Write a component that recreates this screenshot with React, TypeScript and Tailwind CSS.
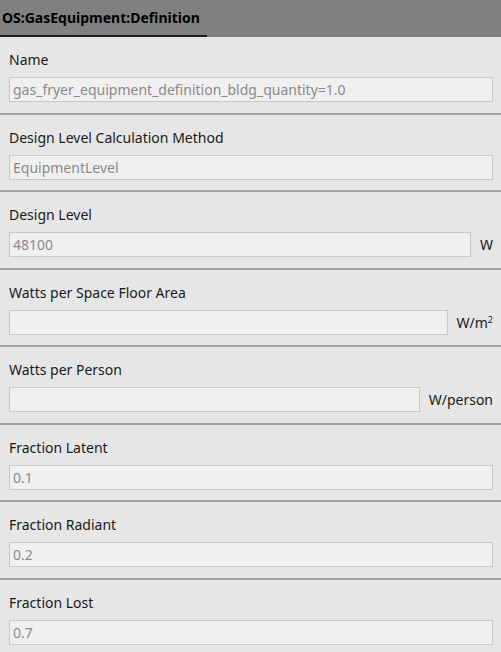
import React from "react";

interface Field {
  label: string;
  value: string;
  unit?: React.ReactNode;
}

const fields: Field[] = [
  { label: "Name", value: "gas_fryer_equipment_definition_bldg_quantity=1.0" },
  { label: "Design Level Calculation Method", value: "EquipmentLevel" },
  { label: "Design Level", value: "48100", unit: "W" },
  {
    label: "Watts per Space Floor Area",
    value: "",
    unit: (
      <span>
        W/m<sup className="text-[9px]">2</sup>
      </span>
    ),
  },
  { label: "Watts per Person", value: "", unit: "W/person" },
  { label: "Fraction Latent", value: "0.1" },
  { label: "Fraction Radiant", value: "0.2" },
  { label: "Fraction Lost", value: "0.7" },
];

function FieldRow({ field }: { field: Field }) {
  return (
    <div className="border-b-2 border-[#a3a3a3] pt-[13px] pb-[11px] pl-[9px] pr-[8px] h-[77.5px]">
      <div className="h-[20px] leading-[20px] text-[14px] text-[#1a1a1a]">{field.label}</div>
      <div className="mt-[7px] flex items-center gap-[9px]">
        <div className="flex-1 h-[25px] bg-[#f0f0f0] border border-[#c8c8c8] flex items-center px-[3px] text-[14px] text-[#8a8a8a] whitespace-nowrap overflow-hidden">
          {field.value}
        </div>
        {field.unit && <div className="text-[14px] text-[#1a1a1a]">{field.unit}</div>}
      </div>
    </div>
  );
}

export default function App() {
  return (
    <div
      className="w-[501px] h-[652px] bg-[#e6e6e6] overflow-hidden"
      style={{ fontFamily: '"Segoe UI", "Noto Sans", sans-serif' }}
    >
      <div className="h-[37px] bg-[#808080] relative">
        <div className="absolute left-0 bottom-0 w-[207px] h-[2px] bg-[#1e1e1e]" />
        <div className="pl-[2px] pt-[6px] text-[14px] font-bold text-black leading-[24px]">
          OS:GasEquipment:Definition
        </div>
      </div>
      {fields.map((f) => (
        <FieldRow key={f.label} field={f} />
      ))}
    </div>
  );
}
